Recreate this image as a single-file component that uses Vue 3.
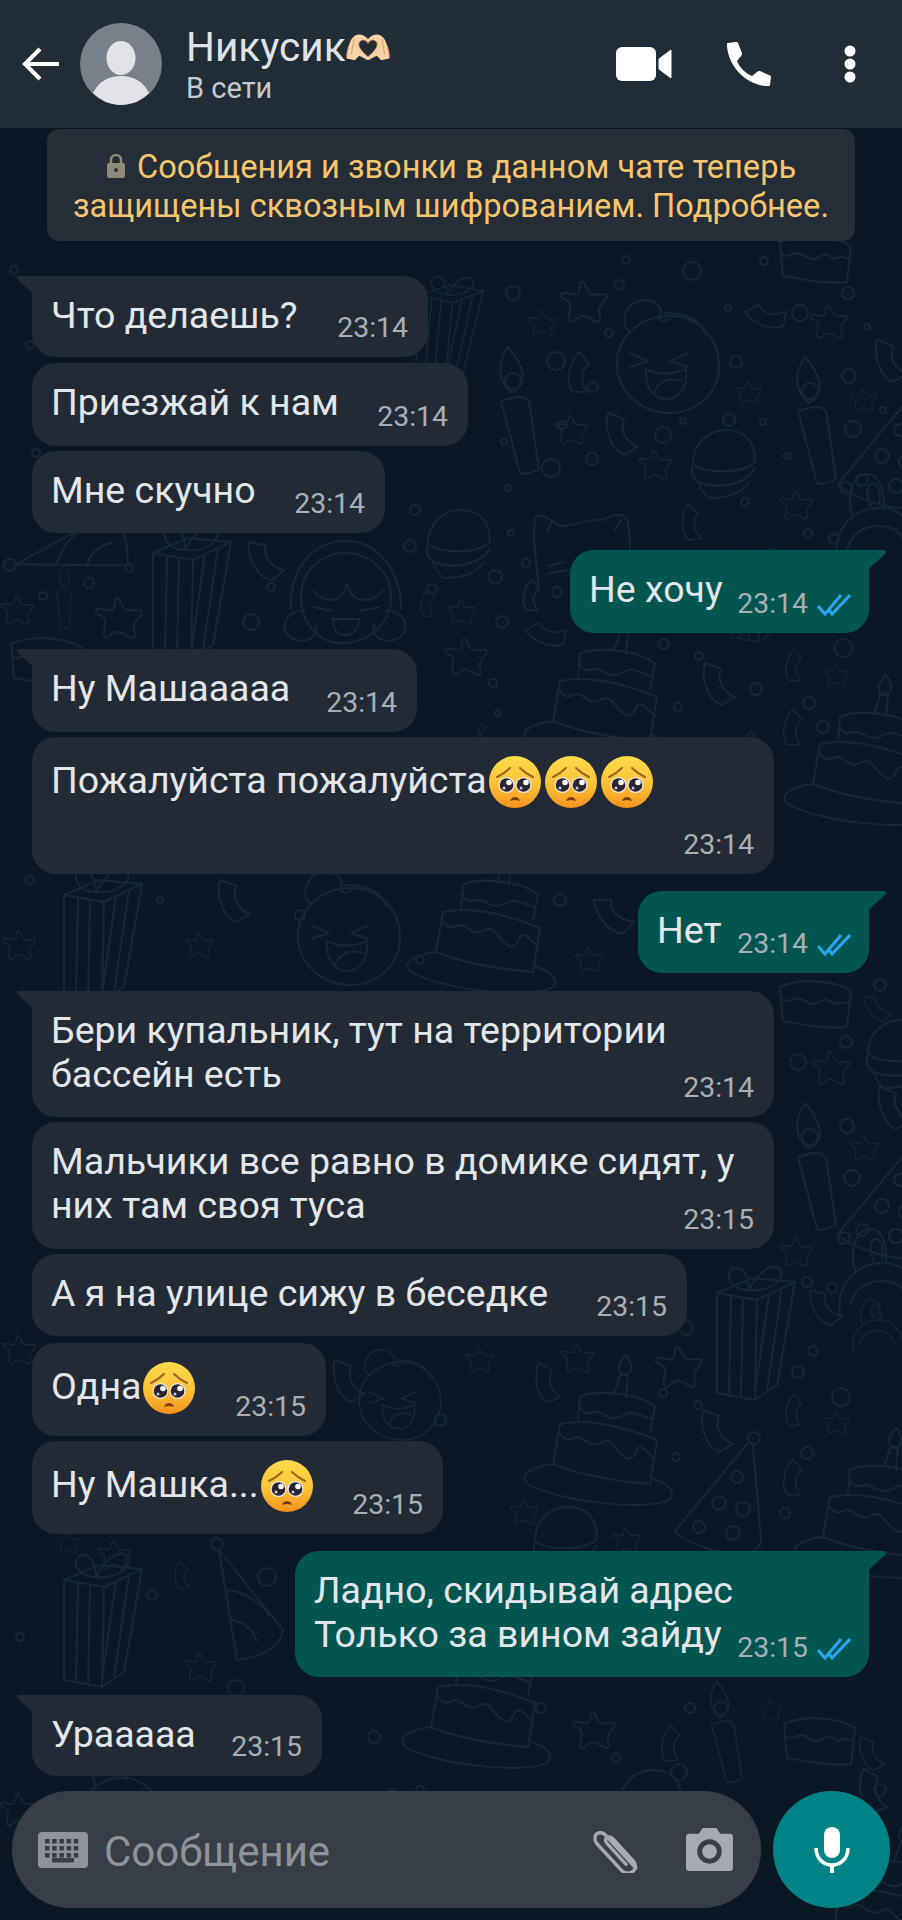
<template>
  <div class="chat">
    <!-- wallpaper doodles -->
    <svg class="chat__wall" width="902" height="1920" aria-hidden="true">
      <defs>
        <g id="cake" fill="none" stroke-width="2" stroke-linejoin="round" stroke-linecap="round">
          <path d="M-47 27C-70 30-82 38-72 47-42 65 50 75 70 62 78 52 62 45 50 40" />
          <path d="M-47 27-40-13C-8-20 30-8 57 3L50 47C15 44-20 38-47 27z" />
          <path d="M-41-5C-34 8-28 0-22 0S-10 12 0 6 12 8 20 16 32 24 36 14 48 16 55 22" />
          <path d="M-22-17-20-40C-4-48 40-44 55-30L50-5" />
          <path d="M-20-30C-14-18-8-28 0-24S14-16 24-22 40-20 52-18" />
          <path d="M14-43 20-62 28-62 26-40" />
          <path d="M26-82C16-72 18-64 24-63 32-62 34-72 26-82z" />
        </g>
        <g id="slice" fill="none" stroke-width="2" stroke-linejoin="round">
          <path d="M-33-16-30 18C-8 22 14 26 34 24L38-12C24-22-12-26-33-16z" />
          <path d="M-33-6C-26 4-20-8-12-4S0 4 8-2 18 4 24 0 34 4 38-2" />
        </g>
        <g id="gift" fill="none" stroke-width="2" stroke-linejoin="round">
          <path d="M-40-47 0-40-2 60-40 53zM0-40 38-58 20 45-2 60M-40-47-5-62 38-58" />
          <path d="M-26-44-28 55M-14-42-16 57M12-46-2 52M25-52 10 50" />
          <path d="M-8-50C-30-50-34-72-20-72-12-72-8-60-8-50zM-8-50C10-48 28-58 24-70 16-80 0-66-8-50z" />
        </g>
        <g id="candle" fill="none" stroke-width="2" stroke-linejoin="round">
          <path d="M-17-16-2-20C4-20 8-20 11-16L21 52C14 56 6 58 2 56z" />
          <path d="M-10-70C-20-56-22-36-6-24 8-32 10-46-10-70z" />
          <circle cx="-5" cy="-36" r="8" />
        </g>
        <g id="star" fill="none" stroke-width="2" stroke-linejoin="round">
          <path d="M-4-20C0-22 2-10 6-8S22-10 22-6 12 4 14 10 16 20 12 20 2 12-4 14-14 24-16 18-12 4-16 0-26-4-24-8-12-6-8-8-6-18-4-20z" />
        </g>
        <g id="conf" fill="none" stroke-width="2" stroke-linejoin="round">
          <path d="M-10-20 6-14C2-4 6 8 20 14L6 22C-8 16-14-6-10-20z" />
        </g>
        <g id="hat" fill="none" stroke-width="2" stroke-linejoin="round">
          <path d="M22-55-52 34C-46 42-10 60 22 58 30 50 34 50 34 42L26-52z" />
          <circle cx="10" cy="-20" r="6" />
          <circle cx="-8" cy="6" r="7" />
          <circle cx="16" cy="12" r="7" />
          <circle cx="-28" cy="30" r="6" />
          <circle cx="6" cy="36" r="7" />
        </g>
        <g id="hatb" fill="none" stroke-width="2" stroke-linejoin="round">
          <path d="M-28-60-10 50C20 46 34 34 36 20z" />
          <path d="M-22-20C-8-20 14-10 22 6M-18 10C-6 10 6 18 10 32" />
          <circle cx="-30" cy="-66" r="6" />
        </g>
        <g id="face" fill="none" stroke-width="2" stroke-linecap="round">
          <path d="M-51 3C-52-28-26-47 2-47 30-47 51-26 51 3 51 30 28 50 2 50-26 50-50 30-51 3z" />
          <path d="M-38-30C-50-40-42-60-28-62-12-66-2-52-10-46-8-42-2-40 4-47M-4-50C6-50 30-50 38-28" />
          <path d="M-38-10-20-2-38 4M20-10 2-2 20 4" />
          <path d="M-22 6C-10 12 4 12 18 6 20 26 10 36-2 36-14 36-24 24-22 6zM-14 30C-10 18 2 14 14 18" />
        </g>
        <g id="girl" fill="none" stroke-width="2" stroke-linecap="round">
          <path d="M-44 0C-44-26-24-44 0-44S46-26 46 0 26 44 0 46-44 26-44 0z" />
          <path d="M-54 12C-56-30-30-56 0-56S56-30 56 12" />
          <path d="M-32-6C-18 8-2 6 2-14 6 6 24 8 38-6M-32 10-14 14M16 14 34 10" />
          <path d="M-12 22H14C14 34 6 38 0 38-8 38-12 32-12 22z" />
          <path d="M-40 14C-60 12-68 34-52 42-36 48-24 36-30 28M40 14C60 12 68 34 52 42 36 48 24 36 30 28" />
        </g>
        <g id="macaron" fill="none" stroke-width="2" stroke-linejoin="round">
          <path d="M-30 4C-30-18-14-30 4-30S32-18 32 2C20 14-18 14-30 4z" />
          <path d="M-31 6C-32 14-30 18-24 22-4 30 24 24 32 8M-26 20C-22 30-18 36-14 38 4 38 18 34 26 22" />
        </g>
        <g id="cat" fill="none" stroke-width="2" stroke-linecap="round">
          <path d="M-44 50C-48 10-52-18-46-24-36-26-28-14-20-14-4-16 8-22 20-20 30-26 40-28 44-20 50 0 44 30 50 50" />
          <path d="M-36-8-30-20M32-10 38-20M-34 26-18 22M-36 34-16 30M8 14 22 10" />
        </g>
        <g id="bunny" fill="none" stroke-width="2" stroke-linecap="round">
          <path d="M-40 30C-44 0-26-20 0-22S44 0 46 28M-24-12C-32-34-24-56-10-56S8-36 6-20" />
          <path d="M-6-24C-12-36-10-46-4-46S4-36 2-26M-30 20C-26 4-14-4 2-4S26 4 30 20" />
        </g>
      </defs>
      <g class="chat__doodles">
        <use
          v-for="(d, i) in doodles"
          :key="i"
          :href="'#' + d[0]"
          :transform="`translate(${d[1]} ${d[2]}) rotate(${d[3] || 0}) scale(${d[4] || 1})`"
        />
        <circle v-for="(c, i) in dots" :key="'c' + i" :cx="c[0]" :cy="c[1]" :r="c[2]" fill="none" stroke-width="2" />
      </g>
    </svg>

    <header class="bar">
      <svg class="bar__back" width="40" height="36" viewBox="0 0 40 36">
        <path d="M38 18H4M19 3 4 18l15 15" fill="none" stroke="#fff" stroke-width="4" />
      </svg>
      <div class="bar__avatar">
        <svg width="82" height="82" viewBox="0 0 82 82">
          <circle cx="41" cy="41" r="41" fill="#78808a" />
          <ellipse cx="41" cy="35" rx="14.500" ry="17" fill="#e1e3e7" />
          <path d="M13 70c6-12 16-17 28-17s22 5 28 17c-7 7-17 12-28 12S20 77 13 70z" fill="#e1e3e7" />
        </svg>
      </div>
      <div class="bar__who">
        <div class="bar__name">Никусик<svg class="bar__hands" width="44" height="30" viewBox="0 0 50 30">
          <path d="M25 6C22 2 17 0 13 1 8 2 5 7 3 14 1 20 0 24 1 28L10 30 15 25 25 30 35 25 40 30 49 28C50 24 49 20 47 14 45 7 42 2 37 1 33 0 28 2 25 6z" fill="#f8d3a6" />
          <path d="M25 11C22 6 17 6 15 10 13 15 19 21 25 26 31 21 37 15 35 10 33 6 28 6 25 11z" fill="#202c36" stroke="#c98550" stroke-width="1" />
          <path d="M3 14C2 20 1 24 1 28M47 14C48 20 49 24 49 28M9 6 6 24M41 6 44 24" fill="none" stroke="#e0a06a" stroke-width="1.200" />
        </svg></div>
        <div class="bar__status">В сети</div>
      </div>
      <div class="bar__actions">
        <svg width="56" height="34" viewBox="0 0 56 34">
          <rect x="0" y="0" width="40" height="34" rx="6" fill="#fff" />
          <path d="M43 12 55 3v28l-12-9z" fill="#fff" stroke="#fff" stroke-linejoin="round" />
        </svg>
        <svg width="46" height="44" viewBox="0 0 46 44">
          <path d="M3 1 11 0c1 0 2 0 2 1l4 10c0 1 0 2-1 3l-4 5c3 7 8 12 15 15l5-4c1-1 2-1 3-1l9 4c1 0 2 1 2 2l-1 8c0 1-1 1-2 1C21 44 2 23 2 2c0-1 0-1 1-1z" fill="#fff" />
        </svg>
        <svg width="14" height="38" viewBox="0 0 14 38">
          <circle cx="7" cy="6" r="5.500" fill="#fff" />
          <circle cx="7" cy="19" r="5.500" fill="#fff" />
          <circle cx="7" cy="32" r="5.500" fill="#fff" />
        </svg>
      </div>
    </header>

    <main class="feed">
      <div class="notice">
        <svg class="notice__lock" width="20" height="26" viewBox="0 0 20 26">
          <path d="M5 11V7a5 5 0 0 1 10 0v4" fill="none" stroke="#8f8a7a" stroke-width="2.500" />
          <rect x="1" y="10" width="18" height="15" rx="2" fill="#8f8a7a" />
          <circle cx="10" cy="17" r="2" fill="#2a3038" />
        </svg>
        Сообщения и звонки в данном чате теперь<br />защищены сквозным шифрованием. Подробнее.
      </div>

      <div
        v-for="(m, i) in messages"
        :key="i"
        class="msg"
        :class="[m.out ? 'msg--out' : 'msg--in', { 'msg--tail': m.tail }]"
        :style="{ marginTop: m.gap + 'px', height: m.h + 'px', width: m.w + 'px' }"
      >
        <svg v-if="m.tail" class="msg__tail" width="24" height="24" viewBox="0 0 24 24">
          <path v-if="m.out" d="M0 0h20c3 0 4 2 2 4L0 24z" />
          <path v-else d="M24 0H4C1 0 0 2 2 4l22 20z" />
        </svg>
        <div class="msg__text">
          <template v-for="(part, j) in m.text" :key="j">
            <br v-if="part === '\n'" />
            <svg v-else-if="part === '*'" class="plead" width="56" height="56" viewBox="0 0 56 56">
              <use href="#plead-face" />
            </svg>
            <template v-else>{{ part }}</template>
          </template>
        </div>
        <div class="msg__meta">
          <span>{{ m.time }}</span>
          <svg v-if="m.out" width="34" height="23" viewBox="0 0 34 23">
            <path d="M1 13l7 8L24 2M12 17l3 4L33 2" fill="none" stroke="#2aa6f0" stroke-width="3" />
          </svg>
        </div>
      </div>
    </main>

    <footer class="compose">
      <div class="compose__box">
        <svg width="50" height="36" viewBox="0 0 50 36">
          <rect width="50" height="36" rx="4" fill="#8e939a" />
          <g fill="#373e47">
            <rect v-for="k in keys" :key="k[0] + '-' + k[1]" :x="k[0]" :y="k[1]" width="4.500" height="4.500" />
            <rect x="14" y="26" width="22" height="4.500" />
          </g>
        </svg>
        <span class="compose__hint">Сообщение</span>
        <svg class="compose__clip" width="51" height="46" viewBox="0 0 52 48">
          <path d="M45 43 14 9C10 4 4 6 3 9c-1 3-1 6 2 9l25 27c3 3 7 4 11 2s5-7 2-11L21 12c-2-2-4-2-6-1s-2 4 0 6l20 22" fill="none" stroke="#a6abb2" stroke-width="3.500" stroke-linecap="round" />
        </svg>
        <svg width="47" height="43" viewBox="0 0 48 44">
          <path d="M3 6h10l4-6h14l4 6h10c2 0 3 1 3 3v32c0 2-1 3-3 3H3c-2 0-3-1-3-3V9c0-2 1-3 3-3z" fill="#a6abb2" />
          <circle cx="24" cy="24" r="10" fill="none" stroke="#373e47" stroke-width="5" />
        </svg>
      </div>
      <div class="compose__mic">
        <svg width="36" height="46" viewBox="0 0 36 46">
          <rect x="10" y="0" width="16" height="31" rx="8" fill="#fff" />
          <path d="M2 21c0 10 7 17 16 17s16-7 16-17" fill="none" stroke="#fff" stroke-width="3.500" />
          <rect x="16" y="37" width="4" height="9" fill="#fff" />
        </svg>
      </div>
    </footer>

    <!-- shared emoji -->
    <svg width="0" height="0" class="chat__defs" aria-hidden="true">
      <defs>
        <linearGradient id="plead-skin" x1="0" y1="0" x2="0" y2="1">
          <stop offset="0" stop-color="#fddc4c" />
          <stop offset="0.550" stop-color="#fcc236" />
          <stop offset="1" stop-color="#f4921e" />
        </linearGradient>
        <g id="plead-face">
          <circle cx="28" cy="28" r="26" fill="url(#plead-skin)" />
          <path d="M10 23C14 21 19 18 23 14M46 23C42 21 37 18 33 14" fill="none" stroke="#9a6420" stroke-width="2" stroke-linecap="round" />
          <circle cx="19.500" cy="31" r="8" fill="#f4ecec" />
          <circle cx="36.500" cy="31" r="8" fill="#f4ecec" />
          <circle cx="19.500" cy="31" r="6.800" fill="#2b2530" />
          <circle cx="36.500" cy="31" r="6.800" fill="#2b2530" />
          <circle cx="22" cy="28.500" r="2.800" fill="#fff" />
          <circle cx="39" cy="28.500" r="2.800" fill="#fff" />
          <circle cx="17" cy="34" r="1.500" fill="#c9c3ea" />
          <circle cx="34" cy="34" r="1.500" fill="#c9c3ea" />
          <path d="M24 46c1.500-3 6.500-3 8 0-2.500-1-5.500-1-8 0z" fill="#7a3c14" stroke="#7a3c14" stroke-width="1.400" stroke-linejoin="round" />
        </g>
      </defs>
    </svg>
  </div>
</template>

<script setup>
// gap = distance from the previous block, h and w are the bubble size
const messages = [
  { text: ["Что делаешь?"], time: "23:14", gap: 35, h: 81, w: 396, tail: true },
  { text: ["Приезжай к нам"], time: "23:14", gap: 6, h: 83, w: 436 },
  { text: ["Мне скучно"], time: "23:14", gap: 5, h: 82, w: 353 },
  { text: ["Не хочу"], time: "23:14", gap: 17, h: 83, w: 299, out: true, tail: true },
  { text: ["Ну Машааааа"], time: "23:14", gap: 16, h: 83, w: 385, tail: true },
  { text: ["Пожалуйста пожалуйста", "*", "*", "*"], time: "23:14", gap: 5, h: 137, w: 742 },
  { text: ["Нет"], time: "23:14", gap: 17, h: 82, w: 231, out: true, tail: true },
  { text: ["Бери купальник, тут на территории", "\n", "бассейн есть"], time: "23:14", gap: 18, h: 126, w: 742, tail: true },
  { text: ["Мальчики все равно в домике сидят, у", "\n", "них там своя туса"], time: "23:15", gap: 5, h: 127, w: 742 },
  { text: ["А я на улице сижу в беседке"], time: "23:15", gap: 5, h: 82, w: 655 },
  { text: ["Одна", "*"], time: "23:15", gap: 7, h: 93, w: 294 },
  { text: ["Ну Машка...", "*"], time: "23:15", gap: 5, h: 93, w: 411 },
  { text: ["Ладно, скидывай адрес", "\n", "Только за вином зайду"], time: "23:15", gap: 17, h: 126, w: 574, out: true, tail: true },
  { text: ["Урааааа"], time: "23:15", gap: 18, h: 81, w: 290, tail: true },
]

const keys = []
for (const y of [7, 14, 21]) {
  for (let x = 7; x < 42; x += 7.2) keys.push([x, y])
}

// [shape, x, y, rotation, scale]
const doodles = [
  ["gift", 450, 335, 4, 0.8], ["face", 668, 363], ["candle", 518, 417], ["candle", 815, 427],
  ["slice", 813, 258], ["macaron", 723, 460], ["cat", 583, 540], ["hat", 890, 450],
  ["bunny", 877, 530], ["gift", 760, 600, 0, 0.7], ["macaron", 458, 540],
  ["star", 585, 302], ["star", 543, 323, 0, 0.6], ["star", 572, 430, 0, 0.7], ["star", 656, 465, 0, 0.7],
  ["star", 749, 393, 0, 0.55], ["star", 830, 322, 0, 0.8], ["star", 864, 400, 0, 0.55], ["star", 797, 505, 0, 0.7],
  ["conf", 578, 372, 30, 0.9], ["conf", 618, 433], ["conf", 765, 317, -50, 0.9], ["conf", 887, 360], ["conf", 690, 522, 20, 0.8],
  ["star", 462, 612, 0, 0.6], ["star", 467, 657, 0, 0.9], ["star", 837, 675, 0, 0.55],
  ["conf", 530, 595, 30, 0.7], ["conf", 545, 635, -50, 0.9], ["conf", 793, 665, 30, 0.7], ["conf", 715, 683], ["conf", 792, 727, 30, 0.8],
  ["cake", 600, 694], ["cake", 860, 757], ["hat", 733, 775, 0, 0.8], ["hatb", 470, 770, 40, 0.6],
  ["star", 18, 610, 0, 0.7], ["star", 120, 618], ["gift", 193, 600], ["girl", 345, 597],
  ["conf", 262, 560, -10], ["conf", 427, 603, 30, 0.6], ["conf", 531, 595, 30, 0.7],
  ["hatb", 80, 547, -80], ["candle", 64, 600, 10, 0.5], ["slice", 44, 660],
  ["gift", 104, 942], ["face", 349, 935], ["cake", 483, 925], ["star", 20, 945, 0, 0.7],
  ["conf", 230, 900], ["star", 200, 945, 0, 0.6], ["conf", 610, 915, -20], ["star", 590, 960, 0, 0.6],
  ["slice", 813, 1003], ["conf", 875, 1008, -20, 0.7], ["star", 832, 1068, 0, 0.8], ["macaron", 898, 1050],
  ["conf", 890, 1107], ["star", 865, 1148, 0, 0.6], ["candle", 815, 1173], ["hat", 890, 1200], ["star", 797, 1252, 0, 0.7],
  ["conf", 822, 1307, -10, 0.9], ["bunny", 880, 1285],
  ["gift", 757, 1340], ["cake", 600, 1437], ["hat", 727, 1497], ["cake", 870, 1510],
  ["star", 578, 1358, 0, 0.7], ["star", 680, 1367], ["star", 525, 1512, 0, 0.6], ["star", 627, 1540, 0, 0.6], ["star", 837, 1423, 0, 0.55],
  ["conf", 545, 1382, 10, 0.9], ["conf", 793, 1410, 30, 0.7], ["conf", 713, 1430], ["conf", 792, 1477, 30, 0.8],
  ["macaron", 565, 1537], ["bunny", 877, 1333, 0, 0.6], ["star", 20, 1350, 0, 0.7], ["star", 480, 1360, 0, 0.6],
  ["conf", 345, 1380], ["face", 400, 1400, 0, 0.8],
  ["star", 115, 1555, 0, 0.7], ["star", 69, 1543, 0, 0.5], ["gift", 104, 1627], ["hatb", 247, 1610], ["star", 201, 1667, 0, 0.7],
  ["conf", 181, 1575, 20, 0.6], ["cake", 478, 1700], ["star", 595, 1730, 0, 0.9], ["candle", 725, 1737, 0, 0.8],
  ["star", 771, 1710, 0, 0.5], ["slice", 817, 1740], ["conf", 670, 1743, 30, 0.8], ["conf", 869, 1753, 0, 0.8],
  ["star", 20, 1810, 0, 0.8], ["macaron", 650, 1800], ["bunny", 120, 1800], ["conf", 870, 1790, 10], ["cake", 880, 1905],
]

const dots = [
  [513, 293, 7], [556, 361, 9], [593, 387, 5], [619, 285, 5], [609, 333, 4], [692, 271, 9], [626, 260, 4],
  [728, 308, 3], [736, 362, 6], [800, 313, 8], [764, 261, 4], [848, 293, 6], [867, 327, 3], [849, 376, 7],
  [883, 410, 3], [853, 429, 8], [787, 456, 3], [729, 420, 6], [683, 421, 3], [663, 435, 8], [592, 459, 6],
  [551, 468, 9], [504, 442, 3], [563, 425, 4], [763, 422, 3], [745, 502, 4], [846, 488, 6], [808, 533, 4],
  [834, 539, 5], [508, 488, 3], [511, 533, 3],
  [495, 577, 7], [526, 563, 4], [557, 592, 5], [502, 622, 6], [664, 644, 5], [699, 656, 4], [843, 648, 9],
  [756, 689, 6], [678, 707, 4], [809, 703, 6], [823, 727, 6], [493, 683, 4], [498, 713, 3],
  [129, 568, 4], [89, 583, 5], [43, 596, 4], [251, 622, 8], [271, 587, 4], [410, 546, 6], [432, 589, 5],
  [880, 985, 6], [846, 1042, 6], [798, 1062, 8], [847, 1126, 7], [852, 1178, 8], [844, 1238, 6],
  [807, 1282, 5], [832, 1288, 5], [813, 1351, 5], [798, 1372, 6], [841, 1397, 9], [663, 1393, 4], [698, 1405, 4],
  [754, 1438, 6], [807, 1453, 6], [676, 1457, 4], [785, 1513, 5], [686, 1328, 7],
  [267, 1577, 9], [152, 1595, 5], [20, 1637, 4], [236, 1688, 8], [690, 1708, 5], [541, 1708, 5], [374, 1737, 6],
  [679, 1772, 8], [616, 1758, 4], [14, 270, 4], [30, 345, 4], [36, 453, 4], [415, 510, 5],
  [880, 1790, 6], [420, 1790, 4], [392, 1792, 3], [440, 1420, 6], [370, 1460, 4],
  [300, 915, 5], [420, 960, 4], [560, 900, 6], [700, 900, 5], [30, 880, 4], [160, 900, 3],
]
</script>

<style scoped>
.chat {
  position: relative;
  width: 902px;
  height: 1920px;
  overflow: hidden;
  background: #0a1826;
  font-family: Roboto, "Noto Sans", sans-serif;
  display: flex;
  flex-direction: column;
}

.chat__wall {
  position: absolute;
  inset: 0;
}

.chat__defs {
  position: absolute;
}

.chat__doodles {
  stroke: #182734;
}

.bar {
  position: relative;
  flex: none;
  height: 128px;
  background: #202c36;
  display: flex;
  align-items: center;
  color: #fff;
}

.bar__back {
  margin-left: 21px;
}

.bar__avatar {
  margin-left: 19px;
  width: 82px;
  height: 82px;
}

.bar__who {
  margin-left: 24px;
}

.bar__name {
  font-size: 40.500px;
  line-height: 48px;
  color: #dfe3e8;
  display: flex;
  align-items: center;
}

.bar__status {
  font-size: 29px;
  line-height: 34px;
  color: #c6cad0;
}

.bar__actions {
  margin-left: auto;
  margin-right: 45px;
  display: flex;
  align-items: center;
  gap: 53px;
}

.bar__actions svg:last-child {
  margin-left: 19px;
}

.feed {
  position: relative;
  flex: 1;
  display: flex;
  flex-direction: column;
  min-height: 0;
}

.notice {
  align-self: flex-start;
  box-sizing: border-box;
  margin: 1px 0 0 47px;
  width: 808px;
  height: 112px;
  background: #252d36;
  border-radius: 12px;
  color: #f6c66f;
  font-size: 32.600px;
  line-height: 39px;
  text-align: center;
  padding-top: 19px;
}

.notice__lock {
  vertical-align: -1px;
  margin-right: 3px;
}

.msg {
  position: relative;
  flex: none;
  box-sizing: border-box;
  border-radius: 24px;
  color: #e3e6ea;
  padding: 17px 19px 0;
}

.msg--in {
  align-self: flex-start;
  margin-left: 32px;
  background: #222b35;
}

.msg--out {
  align-self: flex-end;
  margin-right: 33px;
  background: #035550;
}

.msg--in.msg--tail {
  border-top-left-radius: 0;
}

.msg--out.msg--tail {
  border-top-right-radius: 0;
}

.msg__tail {
  position: absolute;
  top: 0;
}

.msg--in .msg__tail {
  left: -16px;
  fill: #222b35;
}

.msg--out .msg__tail {
  right: -18px;
  fill: #035550;
}

.msg__text {
  font-size: 37.500px;
  line-height: 44px;
}

.plead {
  vertical-align: -17px;
}

.msg__meta {
  position: absolute;
  right: 20px;
  bottom: 13px;
  display: flex;
  align-items: center;
  gap: 9px;
  font-size: 28.400px;
  line-height: 32px;
  color: #a9afb6;
}

.msg--out .msg__meta {
  right: 18px;
  bottom: 13px;
}

.compose {
  position: absolute;
  left: 12px;
  right: 12px;
  bottom: 12px;
  height: 117px;
  display: flex;
  gap: 12px;
}

.compose__box {
  flex: 1;
  background: #373e47;
  border-radius: 58px;
  display: flex;
  align-items: center;
  padding: 0 28px 0 26px;
  box-sizing: border-box;
}

.compose__hint {
  margin-left: 16px;
  margin-right: auto;
  margin-top: 3px;
  font-size: 42px;
  color: #8e939a;
}

.compose__clip {
  margin-right: 43px;
}

.compose__mic {
  flex: none;
  width: 117px;
  height: 117px;
  border-radius: 50%;
  background: #008387;
  display: flex;
  align-items: center;
  justify-content: center;
}
</style>
